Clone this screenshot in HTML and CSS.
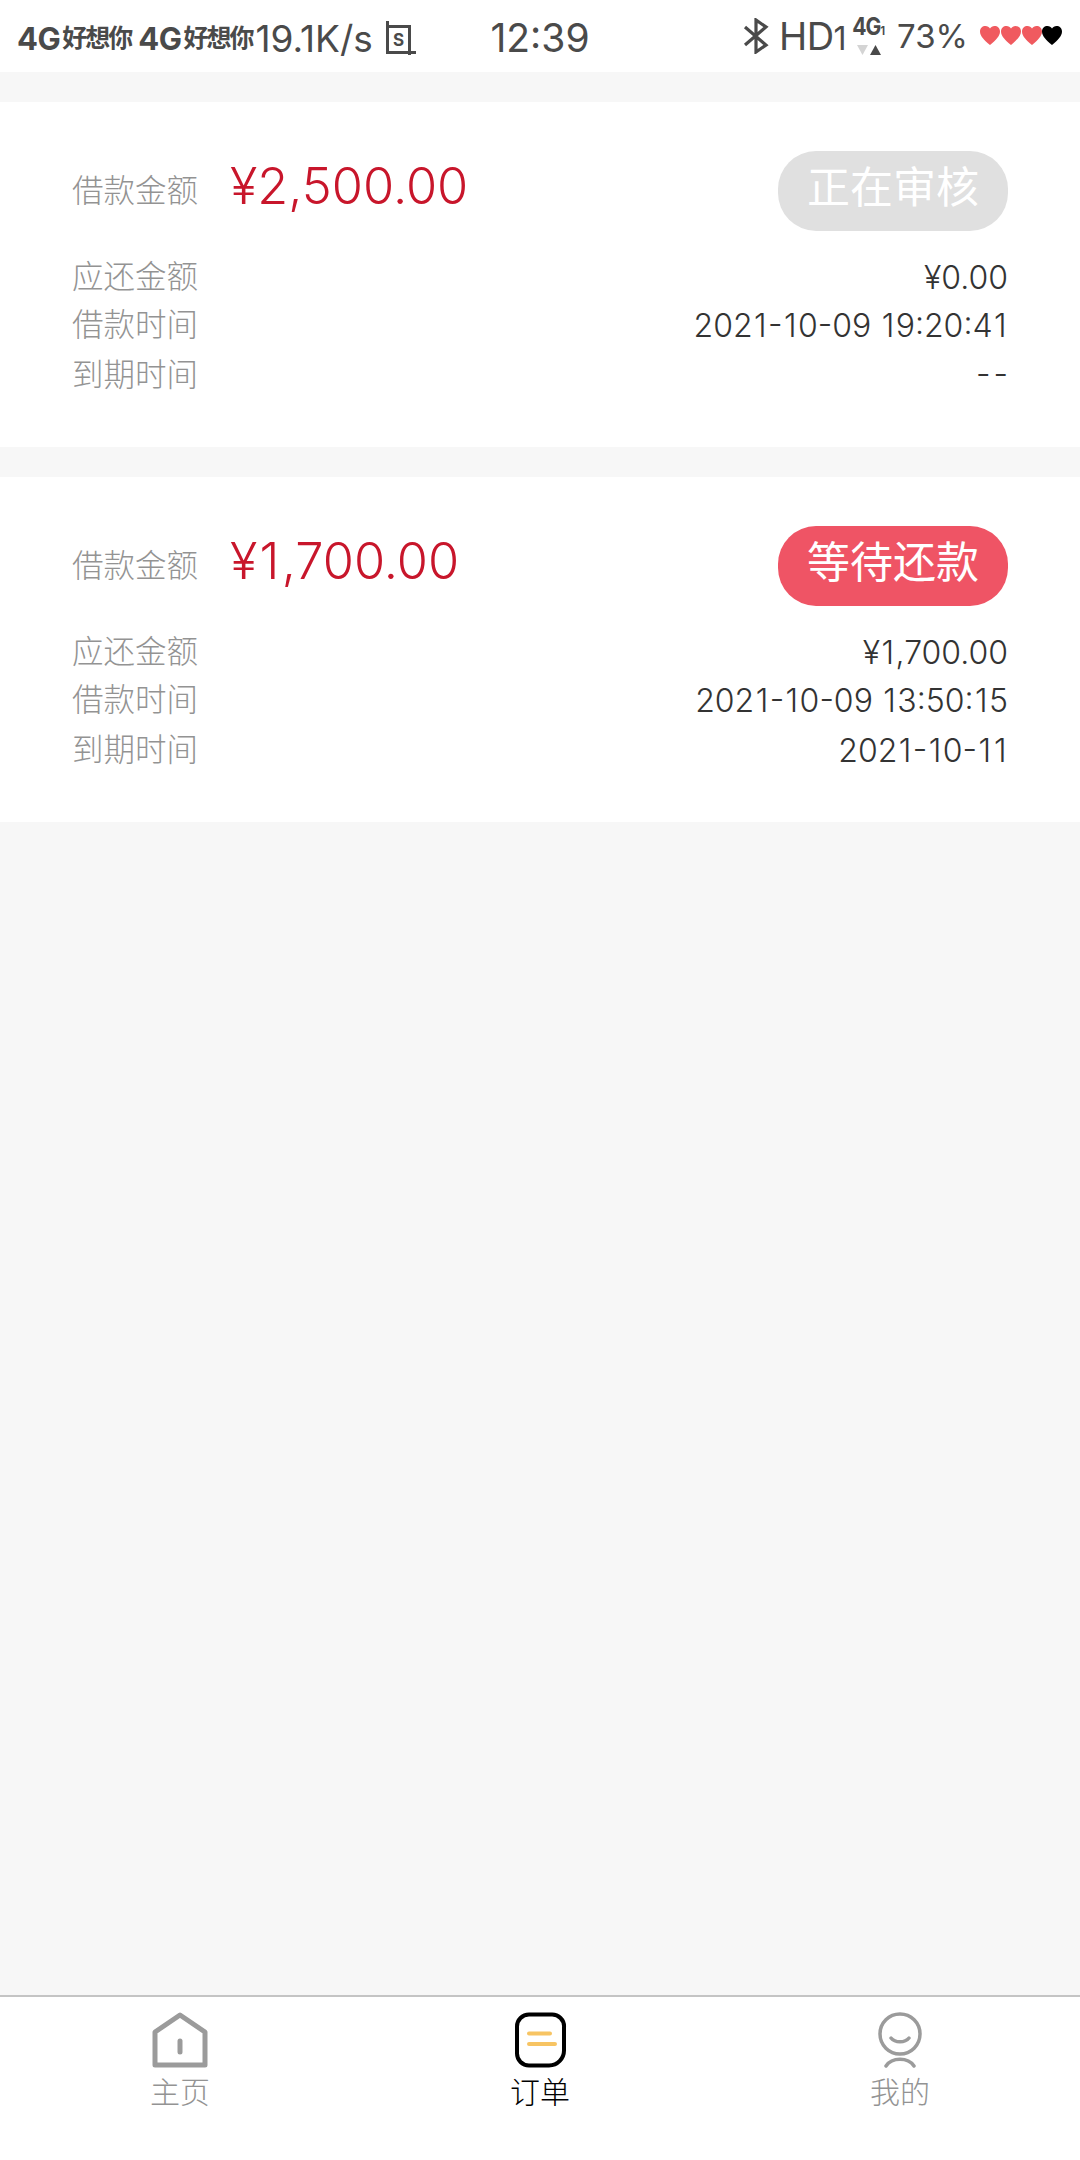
FILE: index.html
```html
<!DOCTYPE html>
<html lang="zh-CN">
<head>
<meta charset="utf-8">
<title>订单</title>
<link rel="stylesheet" href="styles.css">
</head>
<body>
<div class="page">
  <header class="status">
    <div class="status-left">
      <span class="net">4G</span><span class="carrier">好想你</span>
      <span class="net net-2">4G</span><span class="carrier">好想你</span>
      <span class="speed">19.1K/s</span>
      <svg class="shot" viewBox="0 0 31 34" width="31" height="34"><path d="M1 0h3v4h22v26h5v3h-5v1h-3v-1H1zm3 7v23h19V7z" fill="#4a4a4a" fill-rule="evenodd"/><text x="13.500" y="25" text-anchor="middle" class="shot-s">S</text></svg>
    </div>
    <div class="clock">12:39</div>
    <div class="status-right">
      <svg class="bt" viewBox="0 0 26 36" width="26" height="36"><path d="M2 9l21 18-10 7V2l10 7L2 27" fill="none" stroke="#4a4a4a" stroke-width="3.2"/></svg>
      <span class="hd">HD<span class="hd-1">1</span></span>
      <span class="sig"><span class="sig-text">4G<span class="sig-1">1</span></span><svg viewBox="0 0 32 12" width="32" height="12"><path d="M4 1h11L9.500 11z" fill="#d4d4d4"/><path d="M17 11h11L22.500 1z" fill="#4a4a4a"/></svg></span>
      <span class="batt">73%</span>
      <svg class="hearts" viewBox="0 0 82 22" width="82" height="22">
        <path d="M10 20C4 15 0 11 0 6.500 0 3 2.500 1 5.500 1 7.500 1 9 2 10 3.500 11 2 12.500 1 14.500 1 17.500 1 20 3 20 6.500 20 11 16 15 10 20z" fill="#f05a5f"/>
        <path d="M31 20C25 15 21 11 21 6.500 21 3 23.500 1 26.500 1 28.500 1 30 2 31 3.500 32 2 33.500 1 35.500 1 38.500 1 41 3 41 6.500 41 11 37 15 31 20z" fill="#f05a5f"/>
        <path d="M52 20C46 15 42 11 42 6.500 42 3 44.500 1 47.500 1 49.500 1 51 2 52 3.500 53 2 54.500 1 56.500 1 59.500 1 62 3 62 6.500 62 11 58 15 52 20z" fill="#f05a5f"/>
        <path d="M72 20C66 15 62 11 62 6.500 62 3 64.500 1 67.500 1 69.500 1 71 2 72 3.500 73 2 74.500 1 76.500 1 79.500 1 82 3 82 6.500 82 11 78 15 72 20z" fill="#000"/>
      </svg>
    </div>
  </header>

  <main class="list">
    <section class="card">
      <div class="card-head">
        <span class="label">借款金额</span>
        <span class="amount">¥2,500.00</span>
        <span class="pill pill-muted"><span class="pill-text">正在审核</span></span>
      </div>
      <div class="row row-a"><span class="label">应还金额</span><span class="val">¥0.00</span></div>
      <div class="row row-b"><span class="label">借款时间</span><span class="val">202<i>1</i>-<i>1</i>0-09 <i>1</i>9:20:4<i>1</i></span></div>
      <div class="row row-c"><span class="label">到期时间</span><span class="val val-empty">--</span></div>
    </section>
    <section class="card">
      <div class="card-head">
        <span class="label">借款金额</span>
        <span class="amount">¥<i>1</i>,700.00</span>
        <span class="pill pill-due"><span class="pill-text">等待还款</span></span>
      </div>
      <div class="row row-a"><span class="label">应还金额</span><span class="val">¥<i>1</i>,700.00</span></div>
      <div class="row row-b"><span class="label">借款时间</span><span class="val">202<i>1</i>-<i>1</i>0-09 <i>1</i>3:50:<i>1</i>5</span></div>
      <div class="row row-c"><span class="label">到期时间</span><span class="val">202<i>1</i>-<i>1</i>0-<i>1</i><i>1</i></span></div>
    </section>
  </main>

  <nav class="tabs">
    <div class="tab">
      <svg viewBox="0 0 56 56" width="56" height="56"><path d="M3 53V20L28 3l25 17v33z" fill="none" stroke="#9b9b9b" stroke-width="5" stroke-linejoin="round"/><path d="M28 29v11" stroke="#9b9b9b" stroke-width="5" stroke-linecap="round"/></svg>
      <span>主页</span>
    </div>
    <div class="tab tab-on">
      <svg viewBox="0 0 56 56" width="56" height="56"><path d="M17 2.500h22a12 12 0 0 1 13 13V38a15 15 0 0 1-15 15.500H17A12 12 0 0 1 5 41.500v-27A12 12 0 0 1 17 2.500z" fill="none" stroke="#000" stroke-width="4"/><path d="M17 21.500h21M17 32h26" stroke="#f7c463" stroke-width="4" stroke-linecap="round"/></svg>
      <span>订单</span>
    </div>
    <div class="tab">
      <svg viewBox="0 0 56 56" width="56" height="56"><circle cx="28" cy="22" r="20" fill="none" stroke="#9b9b9b" stroke-width="3.500"/><path d="M19 26c4 5 14 5 18 0M14 54c6-9 22-9 28 0" fill="none" stroke="#9b9b9b" stroke-width="3.500" stroke-linecap="round"/></svg>
      <span>我的</span>
    </div>
  </nav>
</div>
</body>
</html>
```

FILE: styles.css
```css
* { box-sizing: border-box; }
html, body { margin: 0; padding: 0; }
body {
  font-family: "Inter", "Noto Sans CJK SC", "Liberation Sans", sans-serif;
  font-feature-settings: "case";
  background: #f7f7f7;
  color: #333;
}
i { font-style: normal; margin: 0 0.045em; }
.page {
  width: 1080px;
  height: 2160px;
  display: flex;
  flex-direction: column;
}
.status {
  height: 72px;
  flex: none;
  background: #fff;
  display: grid;
  grid-template-columns: 473px 100px 1fr;
  align-items: center;
  padding: 0 18px 0 17px;
  color: #4a4a4a;
  font-feature-settings: normal;
}
.status-left, .status-right { display: flex; align-items: center; }
.status-left { line-height: 1; padding-top: 4px; }
.net { font-size: 31px; font-weight: 700; letter-spacing: -0.5px; }
.net-2 { margin-left: 7px; }
.carrier { font-size: 25px; font-weight: 700; letter-spacing: -2px; margin-left: 2px; }
.speed { font-size: 37px; margin-left: 3px; }
.shot { margin-left: 12px; }
.shot-s { font: 700 17px "Inter", sans-serif; fill: #4a4a4a; }
.clock { font-size: 39px; text-align: center; padding-top: 2px; white-space: nowrap; }
.status-right { justify-content: flex-end; }
.bt { margin-right: 10px; }
.hd { font-size: 38px; line-height: 1; letter-spacing: -0.5px; }
.hd-1 { font-size: 32px; }
.sig { width: 33px; display: flex; flex-direction: column; align-items: center; margin: 0 12px 0 6px; line-height: 1; }
.sig-text { display: inline-block; font-size: 24px; font-weight: 700; line-height: 22px; letter-spacing: -1px; white-space: nowrap; transform: scaleX(0.88); }
.sig-1 { font-size: 12px; }
.sig svg { margin-top: 2px; }
.batt { font-size: 33px; margin-right: 12px; }

.list {
  flex: 1;
  padding-top: 30px;
  display: flex;
  flex-direction: column;
  gap: 30px;
}
.card {
  height: 345px;
  background: #fff;
  padding: 49px 72px 0 72px;
}
.card-head {
  display: flex;
  align-items: center;
  height: 80px;
  margin-bottom: 23px;
}
.pill {
  margin-left: auto;
  width: 230px;
  height: 80px;
  border-radius: 38px;
  color: #fff;
  font-size: 43px;
  font-weight: 400;
  display: flex;
  align-items: center;
  justify-content: center;
}
.pill-text { line-height: 1; padding-bottom: 8px; }
.pill-muted { background: #e0e0e0; }
.pill-due { background: #ef5465; }
.label {
  color: #939393;
  font-size: 31.500px;
  font-weight: 300;
  line-height: 46px;
}
.amount {
  color: #c8162b;
  font-size: 50.500px;
  font-weight: 300;
  margin-left: 32px;
  line-height: 60px;
  position: relative;
  top: -5px;
}
.row {
  display: flex;
  justify-content: space-between;
  align-items: center;
  height: 46px;
}
.row-b { margin-top: 2px; }
.row-c { margin-top: 4px; }
.val { font-size: 32px; font-weight: 300; color: #333; }
.val-empty { letter-spacing: 3px; margin-right: -3px; }

.tabs {
  height: 165px;
  flex: none;
  background: #fff;
  border-top: 2px solid #c4c4c4;
  display: grid;
  grid-template-columns: repeat(3, 1fr);
  padding-top: 15px;
}
.tab {
  display: flex;
  flex-direction: column;
  align-items: center;
  color: #939393;
  font-size: 30px;
  font-weight: 300;
  line-height: 40px;
}
.tab span { margin-top: 4px; }
.tab-on { color: #000; }
```
